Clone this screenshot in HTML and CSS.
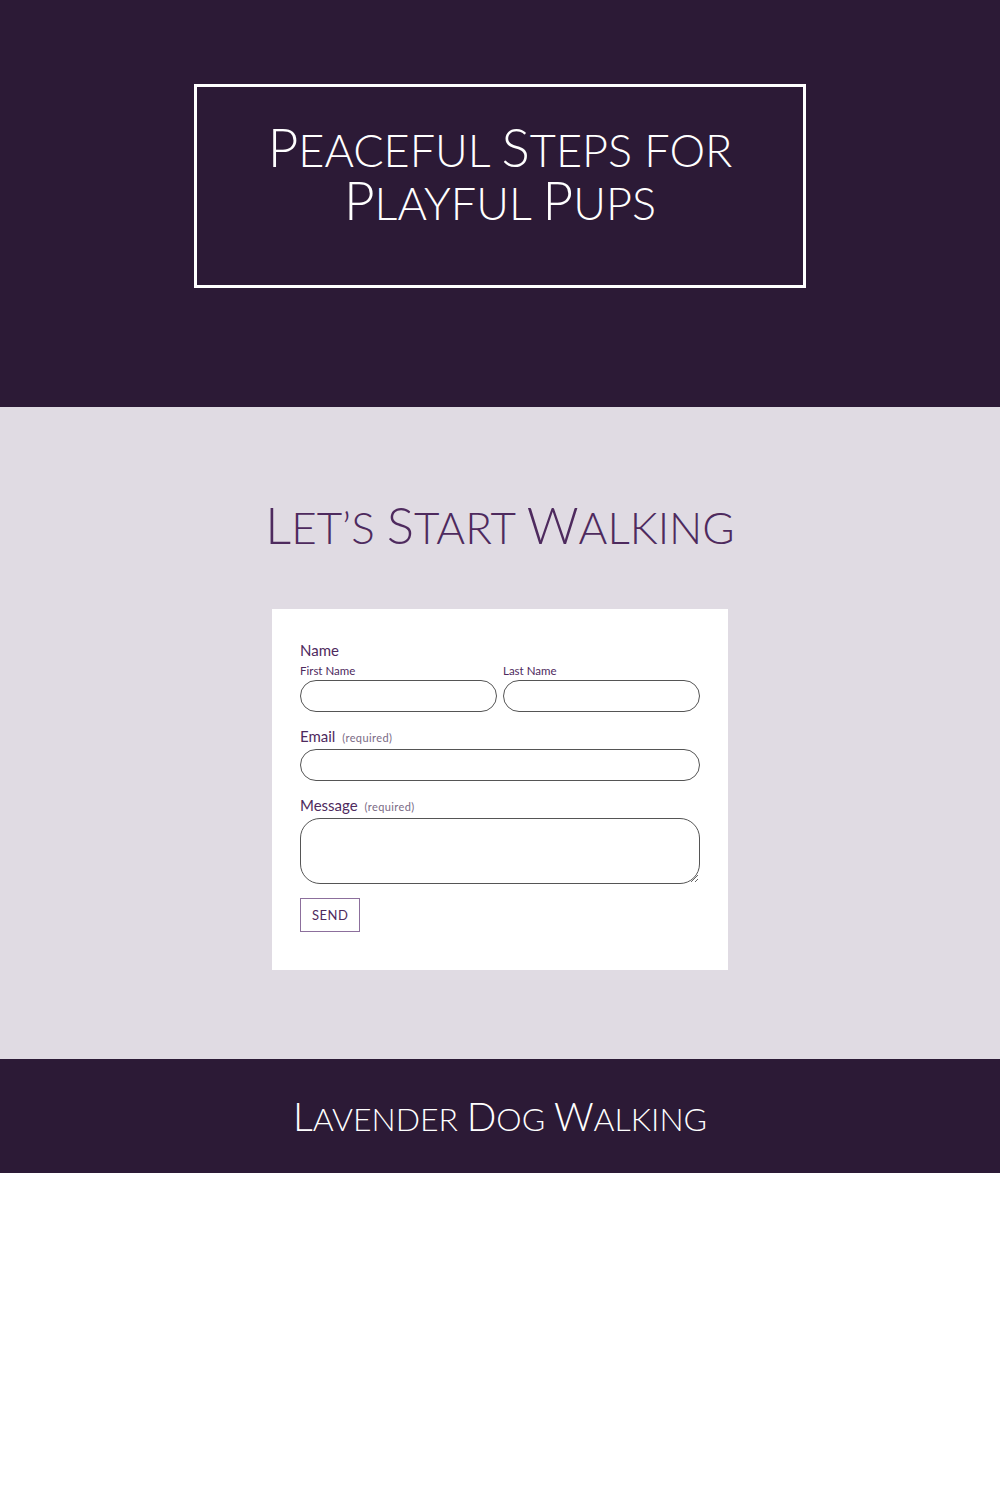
FILE: index.html
```html
<!DOCTYPE html>
<html lang="en">
<head>
  <meta charset="UTF-8">
  <title>Lavender Dog Walking</title>
  <link rel="stylesheet" href="styles.css">
</head>
<body>

  <header class="hero">
    <div class="hero-box">
      <h1 class="caps">
        <span class="line"><span class="ini">P</span>eaceful <span class="ini">S</span>teps for</span>
        <span class="line"><span class="ini">P</span>layful <span class="ini">P</span>ups</span>
      </h1>
    </div>
  </header>

  <section class="contact">
    <h2 class="caps"><span class="ini">L</span>et’s <span class="ini">S</span>tart <span class="ini">W</span>alking</h2>

    <form class="card" onsubmit="return false">
      <div class="field">
        <div class="label">Name</div>
        <div class="name-row">
          <div class="sub">
            <label for="first">First Name</label>
            <input type="text" id="first">
          </div>
          <div class="sub">
            <label for="last">Last Name</label>
            <input type="text" id="last">
          </div>
        </div>
      </div>

      <div class="field">
        <label class="label" for="email">Email <span class="req">(required)</span></label>
        <input type="email" id="email" required>
      </div>

      <div class="field">
        <label class="label" for="msg">Message <span class="req">(required)</span></label>
        <textarea id="msg" required></textarea>
      </div>

      <button type="submit">SEND</button>
    </form>
  </section>

  <footer class="foot">
    <p class="caps"><span class="ini">L</span>avender <span class="ini">D</span>og <span class="ini">W</span>alking</p>
  </footer>

</body>
</html>
```

FILE: styles.css
```css
body { margin: 0; background: #fff; font-family: Lato, "Open Sans", sans-serif; }

/* thin small caps: uppercase text, initials set a size up */
.caps { font-family: Lato, sans-serif; font-weight: 300; text-transform: uppercase; text-align: center; }

.hero { background: #2c1a36; height: 407px; padding-top: 84px; box-sizing: border-box; }
.hero-box { width: 612px; height: 204px; margin: 0 auto; border: 3px solid #fff; box-sizing: border-box; }
.hero h1 { margin: 0; padding-top: 33px; color: #fff; font-size: 45px; }
.hero h1 .line { display: block; height: 53px; line-height: 53px; }
.hero h1 .ini { font-size: 53px; }

.contact { background: #e0dbe3; height: 652px; padding-top: 88px; box-sizing: border-box; }
.contact h2 { margin: 0 0 52px; color: #4e2a5e; font-size: 44px; line-height: 60px; }
.contact h2 .ini { font-size: 51px; }

.card { width: 456px; margin: 0 auto; background: #fff; padding: 31px 28px 38px; box-sizing: border-box; }
.field { margin-bottom: 14px; }
.label { display: block; color: #4e2a5e; font-size: 15px; line-height: 20px; margin-bottom: 1px; }
.req { font-size: 11px; color: #7a6a85; margin-left: 3px; letter-spacing: 0.4px; }
.name-row { display: flex; gap: 6px; }
.sub { flex: 1; }
.sub label { display: block; color: #4e2a5e; font-size: 11.5px; line-height: 15px; margin: 2px 0 2px; }

input, textarea { display: block; width: 100%; box-sizing: border-box; border: 1px solid #555; background: #fff; font: inherit; }
input { height: 32px; border-radius: 16px; }
textarea { height: 66px; border-radius: 20px; resize: vertical; }

button { display: block; margin-top: 12px; padding: 0 11px; height: 34px; background: #fff; border: 1px solid #8c6f9c; color: #4e2a5e; font-family: Lato, sans-serif; font-size: 13px; letter-spacing: 0.5px; cursor: pointer; }

.foot { background: #2c1a36; height: 114px; display: flex; align-items: center; justify-content: center; }
.foot p { margin: 0; color: #fff; font-size: 32px; }
.foot p .ini { font-size: 39px; }
```
